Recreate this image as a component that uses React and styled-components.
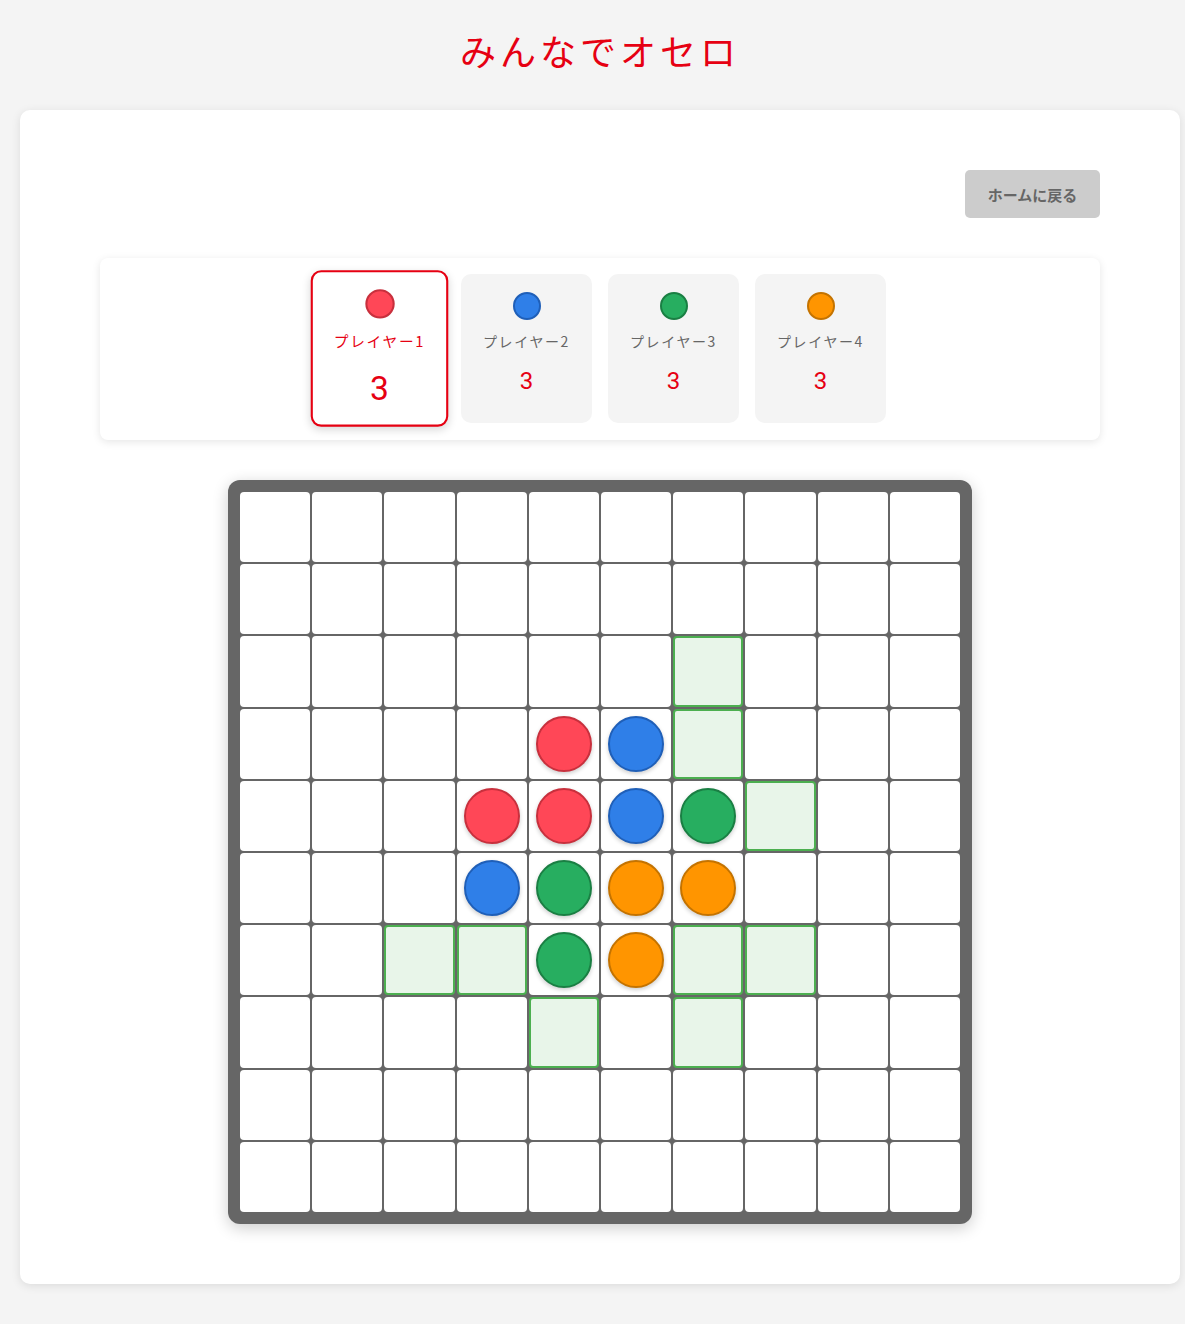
import React from 'react'
import styled, { createGlobalStyle, css } from 'styled-components'

const GlobalStyle = createGlobalStyle`
	body {
		margin: 0;
		background: #f4f4f4;
		font-family: "Noto Sans", "Noto Sans CJK JP", sans-serif;
	}
`

const COLORS = {
	red: { fill: '#ff4757', edge: '#c8303d' },
	blue: { fill: '#2f7fe8', edge: '#1f5fb8' },
	green: { fill: '#27ae60', edge: '#1a7f43' },
	orange: { fill: '#ff9500', edge: '#c47300' },
}

const Page = styled.div`
	padding: 20px 5px 40px 20px;
`

const Title = styled.h1`
	margin: 6px 0 36px;
	text-align: center;
	font-size: 36px;
	font-weight: 400;
	letter-spacing: 4px;
	color: #e60012;
	font-family: "Noto Sans CJK JP", sans-serif;
	line-height: 48px;
`

const Panel = styled.div`
	background: #fff;
	border-radius: 10px;
	box-shadow: 0 2px 10px rgba(0, 0, 0, 0.1);
	padding: 60px 80px 60px;
	display: flex;
	flex-direction: column;
	align-items: center;
`

const TopBar = styled.div`
	width: 100%;
	display: flex;
	justify-content: flex-end;
	margin-bottom: 40px;
`

const HomeButton = styled.button`
	background: #cccccc;
	color: #666;
	font-family: "Noto Sans CJK JP", sans-serif;
	font-weight: 700;
	font-size: 15px;
	width: 135px;
	height: 48px;
	border: none;
	border-radius: 5px;
	cursor: pointer;
`

const PlayersBox = styled.div`
	width: 100%;
	box-sizing: border-box;
	background: #fff;
	border-radius: 8px;
	box-shadow: 0 2px 8px rgba(0, 0, 0, 0.1);
	padding: 16px 0 17px;
	display: flex;
	justify-content: center;
	gap: 16px;
	margin-bottom: 40px;
`

const PlayerCard = styled.div`
	width: 131px;
	height: 149px;
	box-sizing: border-box;
	border-radius: 10px;
	background: #f4f4f4;
	display: flex;
	flex-direction: column;
	align-items: center;
	padding-top: 18px;
	${(p) => p.$active && css`
		background: #fff;
		border: 2px solid #e60012;
		padding-top: 16px;
		transform: scale(1.05);
		box-shadow: 0 3px 8px rgba(0, 0, 0, 0.15);
	`}
`

const Dot = styled.div`
	width: 28px;
	height: 28px;
	box-sizing: border-box;
	border-radius: 50%;
	background: ${(p) => COLORS[p.$color].fill};
	border: 2px solid ${(p) => COLORS[p.$color].edge};
	margin-bottom: 11px;
`

const PlayerName = styled.div`
	font-family: "Noto Sans CJK JP", sans-serif;
	font-size: 14px;
	line-height: 20px;
	letter-spacing: 1.6px;
	color: ${(p) => (p.$active ? '#e60012' : '#666')};
	margin-bottom: 15px;
`

const Score = styled.div`
	font-family: Roboto, "Noto Sans", sans-serif;
	font-size: 24px;
	line-height: 30px;
	color: #e60012;
	${(p) => p.$active && css`
		font-size: 32px;
		line-height: 36px;
		margin-top: 3px;
	`}
`

const Board = styled.div`
	width: 744px;
	box-sizing: border-box;
	padding: 12px;
	background: #666;
	border-radius: 12px;
	box-shadow: 0 4px 16px rgba(0, 0, 0, 0.2);
	display: grid;
	grid-template-columns: repeat(10, 1fr);
	gap: 2px;
`

const Cell = styled.div`
	aspect-ratio: 1;
	box-sizing: border-box;
	background: #fff;
	border-radius: 4px;
	display: flex;
	align-items: center;
	justify-content: center;
	${(p) => p.$hint && css`
		background: #e8f5e9;
		border: 2px solid #4caf50;
	`}
`

const Piece = styled.div`
	width: 56px;
	height: 56px;
	box-sizing: border-box;
	border-radius: 50%;
	background: ${(p) => COLORS[p.$color].fill};
	border: 2px solid ${(p) => COLORS[p.$color].edge};
	box-shadow: 0 2px 4px rgba(0, 0, 0, 0.2);
`

const players = [
	{ name: 'プレイヤー1', color: 'red', score: 3 },
	{ name: 'プレイヤー2', color: 'blue', score: 3 },
	{ name: 'プレイヤー3', color: 'green', score: 3 },
	{ name: 'プレイヤー4', color: 'orange', score: 3 },
]

const pieces = {
	'3-4': 'red', '3-5': 'blue',
	'4-3': 'red', '4-4': 'red', '4-5': 'blue', '4-6': 'green',
	'5-3': 'blue', '5-4': 'green', '5-5': 'orange', '5-6': 'orange',
	'6-4': 'green', '6-5': 'orange',
}

const hints = ['2-6', '3-6', '4-7', '6-2', '6-3', '6-6', '6-7', '7-4', '7-6']

function App() {
	const cells = []
	for (let r = 0; r < 10; r++) {
		for (let c = 0; c < 10; c++) {
			const key = `${r}-${c}`
			cells.push(
				<Cell key={key} $hint={hints.includes(key)}>
					{pieces[key] && <Piece $color={pieces[key]} />}
				</Cell>
			)
		}
	}

	return (
		<Page>
			<GlobalStyle />
			<Title>みんなでオセロ</Title>
			<Panel>
				<TopBar>
					<HomeButton>ホームに戻る</HomeButton>
				</TopBar>
				<PlayersBox>
					{players.map((p, i) => (
						<PlayerCard key={p.name} $active={i === 0}>
							<Dot $color={p.color} />
							<PlayerName $active={i === 0}>{p.name}</PlayerName>
							<Score $active={i === 0}>{p.score}</Score>
						</PlayerCard>
					))}
				</PlayersBox>
				<Board>{cells}</Board>
			</Panel>
		</Page>
	)
}

export default App
